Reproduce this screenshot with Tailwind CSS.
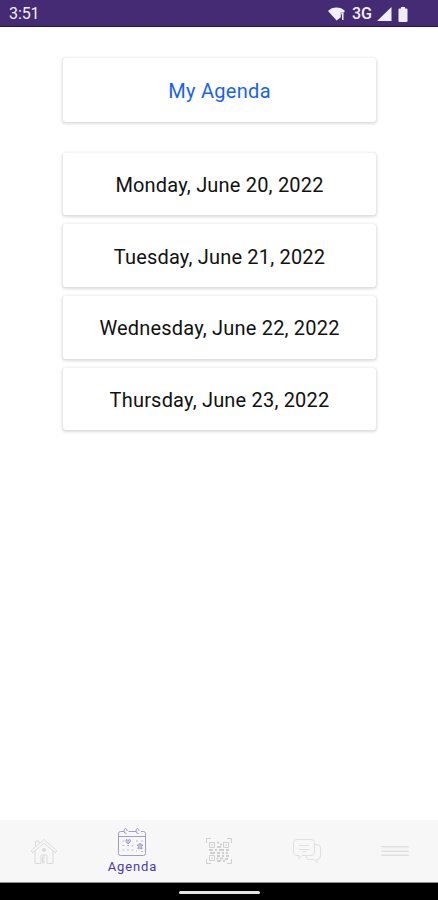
<!DOCTYPE html>
<html lang="en">
<head>
    <meta charset="UTF-8">
    <meta name="viewport" content="width=device-width, initial-scale=1.0">
    <title>Agenda</title>
    <script src="https://cdn.jsdelivr.net/npm/@tailwindcss/browser@4"></script>
    <style> body { font-family: Roboto, 'Liberation Sans', sans-serif; } </style>
</head>
<body class="bg-white">
    <div class="flex flex-col w-[438px] h-[900px] overflow-hidden">

        <!-- Status bar -->
        <header class="flex items-center justify-between h-[27px] shrink-0 pl-[9px] pr-[30px] pt-[2px] bg-[#452a74] border-b border-[#2a1062] text-[#f3effa]">
            <span class="text-base tracking-[-0.1px]">3:51</span>
            <div class="flex items-center">
                <svg class="w-[18px] h-4 mr-[6px]" viewBox="0 0 18 16" fill="currentColor">
                    <path d="M0 5C4.500 .4 12.500 .4 17 5l-1.200 1.600h-3v4.600L8.600 14.600z"/>
                    <path d="M13.300 6.500h2.200V14h-1.500V8.500h-.7z"/>
                </svg>
                <span class="text-base font-medium leading-4 tracking-[0px] mr-[5px]">3G</span>
                <svg class="w-[15px] h-[14px] mr-[6px]" viewBox="0 0 15 14" fill="currentColor"><path d="M14.500 0v14H0z"/></svg>
                <svg class="w-[10px] h-[15px]" viewBox="0 0 10 15" fill="currentColor"><path d="M3 0h4v1.500h1.500q1 0 1 1V14q0 1-1 1h-7q-1 0-1-1V2.500q0-1 1-1H3z"/></svg>
            </div>
        </header>

        <!-- Days -->
        <main class="flex-1 flex flex-col items-center pt-[31px] text-xl tracking-[0.19px] text-[#111]">
            <a href="#" class="flex items-center justify-center w-[313px] h-16 mb-[30.500px] pt-[2px] pl-px rounded-[3px] shadow-[0_1px_3px_1px_rgba(0,0,0,0.14)] tracking-[0.3px] text-[#1a62ee]">My Agenda</a>
            <div class="flex flex-col gap-[9px]">
                <a href="#" class="flex items-center justify-center w-[313px] h-[62.700px] pt-[2px] pl-px rounded-[3px] shadow-[0_1px_3px_1px_rgba(0,0,0,0.14)]">Monday, June 20, 2022</a>
                <a href="#" class="flex items-center justify-center w-[313px] h-[62.700px] pt-[2px] pl-px rounded-[3px] shadow-[0_1px_3px_1px_rgba(0,0,0,0.14)]">Tuesday, June 21, 2022</a>
                <a href="#" class="flex items-center justify-center w-[313px] h-[62.700px] pt-[2px] pl-px rounded-[3px] shadow-[0_1px_3px_1px_rgba(0,0,0,0.14)]">Wednesday, June 22, 2022</a>
                <a href="#" class="flex items-center justify-center w-[313px] h-[62.700px] pt-[2px] pl-px rounded-[3px] shadow-[0_1px_3px_1px_rgba(0,0,0,0.14)]">Thursday, June 23, 2022</a>
            </div>
        </main>

        <!-- Tab bar -->
        <nav class="grid grid-cols-5 items-center h-[63px] shrink-0 bg-[#f7f7f7] border-b border-[#8d8d8d] text-[#dbdbdb]">
            <a href="#" class="flex justify-center">
                <svg class="w-7 h-7" viewBox="0 0 28 28" fill="none" stroke="currentColor">
                    <path d="M1 14 14 2.500 27 14l-2 1.500L14 6 3 15.500zM5 14v12.500h6V18h6v8.500h6V14M5.500 9.500V4H9v2.500M12.500 26.500v-7M14 18v8.500"/>
                    <circle cx="14" cy="13" r="1.500" fill="currentColor"/>
                </svg>
            </a>
            <a href="#" class="flex flex-col items-center pl-px text-[#4a3bb0]">
                <svg class="w-[30px] h-[30px]" viewBox="0 0 30 30" fill="none" stroke="#a19ad4">
                    <path d="M7 4.500H3.500q-2 0-2 2v20q0 2 2 2h23q2 0 2-2v-20q0-2-2-2H24M11.500 4.500h8M1.500 9.500h27"/>
                    <path d="M9.500 6.500q-2.500 0-2.500-2.500T8.500 1.500 10 4M21.500 6.500q-2.500 0-2.500-2.500t1.500-2.500T22 4"/>
                    <path stroke="#bdb8e0" d="M5.500 14h2M5.500 18.500h2M5.500 23h2M10 18.500h2M10 23h2M14.500 19h2M14.500 23h2M19 14h2M24 14h2M19 24h1M24 24.500h2"/>
                    <path d="m11 17-2-2.500q-.5-2 1-2l1 1 1.500-1q2 .5 .5 2.500z" fill="#c9c5e8"/>
                    <path d="m23 16 1 2h2l-1.500 1.500.5 2.500-2-1-2 1 .5-2.500L20 18h2z" fill="#c9c5e8"/>
                </svg>
                <span class="text-[13px] leading-[16px] mt-[2px] tracking-[0.850px] pl-px">Agenda</span>
            </a>
            <a href="#" class="flex justify-center">
                <svg class="w-7 h-7" viewBox="0 0 28 28" fill="none" stroke="#cfcfcf">
                    <path d="M1.500 6V1.500H6M22 1.500h4.500V6M26.500 22v4.500H22M6 26.500H1.500V22"/>
                    <path d="M4.500 5.500h5v5h-5zM18.500 5.500h5v5h-5zM4.500 18.500h5v5h-5z"/>
                    <path stroke-width="1.800" d="M6.500 8h1M20.500 8h1M6.500 21h1M12 5.500h2M15 7.500h2M12 10h4M4 13h4M10 13h2M14 13h5M21 13h3M5 16h5M12 16h3M17 16h2M21 16h2M12 19h3M17 19h2M21 19h3M11.500 21.500h2M15 21.500h3M20 22h3M12 24h4M18 24h2"/>
                </svg>
            </a>
            <a href="#" class="flex justify-center">
                <svg class="w-7 h-7" viewBox="0 0 28 28" fill="none" stroke="#e0e0e0">
                    <path d="M4 2.500h14q3.500 0 3.500 3.500v9q0 3.500-3.500 3.500h-9l-3 3v-3H4Q.5 18.500.5 15V6Q.5 2.500 4 2.500z"/>
                    <path d="M6 8.500h10M6 12.500h10M10 14.500h3"/>
                    <path d="M21.500 7.500h2.500q3.500 0 3.500 3.500v8q0 3.500-3.500 3.500v3l-3-3h-5q-2.500 0-3-3.500"/>
                </svg>
            </a>
            <a href="#" class="flex justify-center pl-px">
                <svg class="w-7 h-7" viewBox="0 0 28 28" fill="none" stroke="#dfdfdf">
                    <path d="M.5 9.500h27M.5 18.500h27"/>
                    <path stroke="#ececec" stroke-width="2" d="M.5 10.500h27M.5 14h27M.5 18h27"/>
                    <path d="M.5 9.500h27M.5 14.500h27M.5 18.500h27"/>
                </svg>
            </a>
        </nav>

        <!-- Gesture bar -->
        <div class="flex justify-center items-center h-[17px] shrink-0 pt-[2px] bg-black">
            <div class="w-[81px] h-[3px] rounded-full bg-[#e4e4e4]"></div>
        </div>
    </div>
</body>
</html>
